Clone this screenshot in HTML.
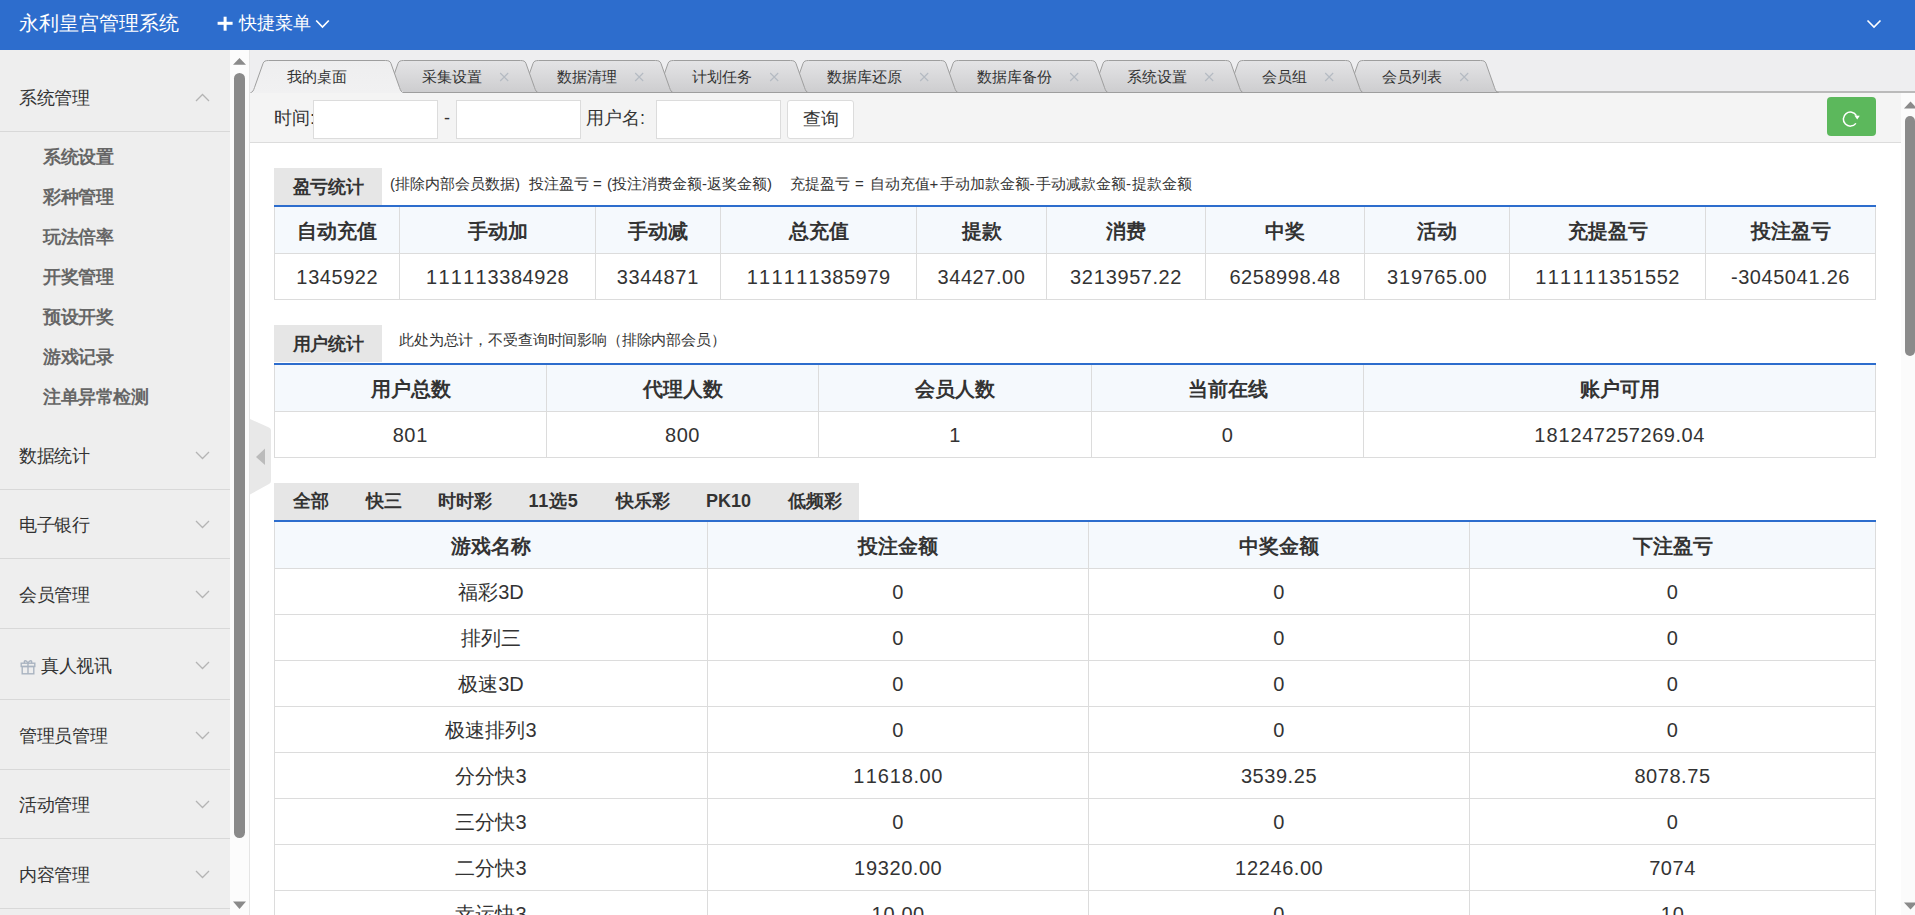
<!DOCTYPE html>
<html><head><meta charset="utf-8"><style>
*{box-sizing:border-box}
html,body{margin:0;padding:0}
body{width:1915px;height:915px;overflow:hidden;position:relative;background:#fff;font-family:"Liberation Sans",sans-serif;color:#333}
.abs{position:absolute;white-space:nowrap}
#hdr{position:absolute;left:0;top:0;width:1915px;height:50px;background:#2d6dcd;color:#fff}
#title{position:absolute;left:19px;top:0;line-height:46px;font-size:20px}
#quick{position:absolute;left:217px;top:0;line-height:46px;font-size:18px}
#side{position:absolute;left:0;top:50px;width:230px;height:865px;background:#eeeeee;overflow:hidden}
.grp{position:absolute;left:0;width:230px}
.gt{position:absolute;left:19px;top:1px;height:100%;display:flex;align-items:center;font-size:18px;letter-spacing:-0.3px;color:#333}
.chev{position:absolute;left:195px;top:31px}
.sub{position:absolute;left:43px;height:40px;line-height:40px;font-size:18px;letter-spacing:-0.4px;font-weight:bold;color:#666}
#sscroll{position:absolute;left:230px;top:50px;width:19px;height:865px;background:#fcfcfc}
#tabbar{position:absolute;left:249px;top:50px;width:1666px;height:43px;background:#eeeef0}
.tl{position:absolute;top:61px;line-height:32px;font-size:15px;color:#333}
.tx{position:absolute;top:60px;line-height:32px;font-size:17px;color:#a9b1bb;width:10px;text-align:center}
#toolbar{position:absolute;left:249px;top:93px;width:1652px;height:50px;background:#f4f4f4;border-bottom:1px solid #dcdcdc}
.lbl{position:absolute;top:0;line-height:50px;font-size:18px;color:#333}
.inp{position:absolute;top:7px;height:39px;background:#fff;border:1px solid #dcdcdc}
.btn{position:absolute;top:7px;height:39px;background:#fff;border:1px solid #dcdcdc;border-radius:3px;font-size:18px;line-height:37px;text-align:center;color:#333}
.sect{position:absolute;left:274px;height:37px;padding-top:1px;background:#e6e6e6;font-size:18px;letter-spacing:-0.4px;font-weight:bold;color:#333;line-height:37px;text-align:center}
.note{position:absolute;font-size:15px;color:#333;white-space:pre}
.bl{position:absolute;left:274px;width:1602px;height:2px;background:#2d6dcd}
.tb{position:absolute;left:274px;border-collapse:collapse;table-layout:fixed;width:1602px}
.tb th,.tb td{border:1px solid #dcdcdc;text-align:center;padding:2px 0 0 0;font-size:20px;color:#333}
.tb tr:first-child th{border-top:none}
.tb td.n{letter-spacing:0.55px}
.o{font-style:normal;padding:0 0.35px}
.th th{background:#f5f9fd;font-weight:bold;padding-top:4px}
#mscroll{position:absolute;left:1901px;top:93px;width:14px;height:822px;background:#fbfbfb}
</style></head><body>
<div id="hdr">
  <div id="title">永利皇宫管理系统</div>
  <div id="quick" style="left:239px;top:0px">快捷菜单</div><svg class="abs" style="left:217px;top:16px" width="16" height="15" viewBox="0 0 16 15"><rect x="0.6" y="5.8" width="15" height="3" fill="#fff"/><rect x="6.6" y="0.7" width="3" height="14" fill="#fff"/></svg><svg class="abs" style="left:315px;top:19px" width="15" height="10" viewBox="0 0 15 10"><path d="M1.2 1.5 L7.5 8 L13.8 1.5" fill="none" stroke="#fff" stroke-width="1.7"/></svg>
  <svg class="abs" style="left:1866px;top:19px" width="16" height="10" viewBox="0 0 16 10"><path d="M1.5 1.5 L8 8 L14.5 1.5" fill="none" stroke="#fff" stroke-width="1.6"/></svg>
</div>
<div id="side">
<div class="grp" style="top:12px;height:70px;border-bottom:1px solid #d8d8d8"><span class="gt">系统管理</span><svg class="chev" width="15" height="9" viewBox="0 0 15 9"><path d="M1 8 L7.5 1.5 L14 8" fill="none" stroke="#b4b4b4" stroke-width="1.3"/></svg></div><div class="sub" style="top:87px">系统设置</div><div class="sub" style="top:127px">彩种管理</div><div class="sub" style="top:167px">玩法倍率</div><div class="sub" style="top:207px">开奖管理</div><div class="sub" style="top:247px">预设开奖</div><div class="sub" style="top:287px">游戏记录</div><div class="sub" style="top:327px">注单异常检测</div><div class="grp" style="top:370px;height:70px;border-bottom:1px solid #d8d8d8"><span class="gt">数据统计</span><svg class="chev" width="15" height="9" viewBox="0 0 15 9"><path d="M1 1 L7.5 7.5 L14 1" fill="none" stroke="#b4b4b4" stroke-width="1.3"/></svg></div><div class="grp" style="top:439px;height:70px;border-bottom:1px solid #d8d8d8"><span class="gt">电子银行</span><svg class="chev" width="15" height="9" viewBox="0 0 15 9"><path d="M1 1 L7.5 7.5 L14 1" fill="none" stroke="#b4b4b4" stroke-width="1.3"/></svg></div><div class="grp" style="top:509px;height:70px;border-bottom:1px solid #d8d8d8"><span class="gt">会员管理</span><svg class="chev" width="15" height="9" viewBox="0 0 15 9"><path d="M1 1 L7.5 7.5 L14 1" fill="none" stroke="#b4b4b4" stroke-width="1.3"/></svg></div><div class="grp" style="top:580px;height:70px;border-bottom:1px solid #d8d8d8"><svg style="position:absolute;left:19.5px;top:28.5px" width="16" height="16" viewBox="0 0 16 16"><g fill="none" stroke="#a9b3c0" stroke-width="1.4"><rect x="1.2" y="4.2" width="13.6" height="3.3"/><rect x="2.2" y="7.5" width="11.6" height="7.3"/><path d="M8 4.2 V14.8"/><path d="M8 4.2 C6.5 0.8 3.5 1 4.5 4.2 M8 4.2 C9.5 0.8 12.5 1 11.5 4.2"/></g></svg><span class="gt" style="left:41px">真人视讯</span><svg class="chev" width="15" height="9" viewBox="0 0 15 9"><path d="M1 1 L7.5 7.5 L14 1" fill="none" stroke="#b4b4b4" stroke-width="1.3"/></svg></div><div class="grp" style="top:650px;height:70px;border-bottom:1px solid #d8d8d8"><span class="gt">管理员管理</span><svg class="chev" width="15" height="9" viewBox="0 0 15 9"><path d="M1 1 L7.5 7.5 L14 1" fill="none" stroke="#b4b4b4" stroke-width="1.3"/></svg></div><div class="grp" style="top:719px;height:70px;border-bottom:1px solid #d8d8d8"><span class="gt">活动管理</span><svg class="chev" width="15" height="9" viewBox="0 0 15 9"><path d="M1 1 L7.5 7.5 L14 1" fill="none" stroke="#b4b4b4" stroke-width="1.3"/></svg></div><div class="grp" style="top:789px;height:70px;border-bottom:1px solid #d8d8d8"><span class="gt">内容管理</span><svg class="chev" width="15" height="9" viewBox="0 0 15 9"><path d="M1 1 L7.5 7.5 L14 1" fill="none" stroke="#b4b4b4" stroke-width="1.3"/></svg></div>
</div>
<div id="sscroll">
  <svg class="abs" style="left:0;top:0" width="19" height="20" viewBox="0 0 19 20"><path d="M3 14.8 L9.5 7.9 L16 14.8 Z" fill="#8a8a8a"/></svg>
  <div class="abs" style="left:4px;top:23px;width:11px;height:765px;background:#8a8a8a;border-radius:6px"></div>
  <svg class="abs" style="left:0;top:845px" width="19" height="20" viewBox="0 0 19 20"><path d="M3 6.5 L9.5 14 L16 6.5 Z" fill="#8a8a8a"/></svg>
</div>
<div id="tabbar"></div>

<svg class="abs" style="left:0;top:0" width="1915" height="95" viewBox="0 0 1915 95">
<defs>
<linearGradient id="gi" x1="0" y1="0" x2="0" y2="1"><stop offset="0" stop-color="#e4e4e6"/><stop offset="1" stop-color="#cdcdcf"/></linearGradient>
<linearGradient id="ga" x1="0" y1="0" x2="0" y2="1"><stop offset="0" stop-color="#eeeeef"/><stop offset="1" stop-color="#f1f1f2"/></linearGradient>
</defs>
<rect x="249" y="91" width="1666" height="2" fill="#bababa"/><path d="M1345.5,92.5 C1347.5,92.5 1348.5,90.5 1349.5,87.5 L1358.0,63.5 C1358.8,61.2 1360.5,60.5 1363.5,60.5 L1480.5,60.5 C1483.5,60.5 1485.2,61.2 1486.0,63.5 L1494.5,87.5 C1495.5,90.5 1496.5,92.5 1498.5,92.5 Z" fill="url(#gi)" stroke="#9e9e9e" stroke-width="1"/><path d="M1225.5,92.5 C1227.5,92.5 1228.5,90.5 1229.5,87.5 L1238.0,63.5 C1238.8,61.2 1240.5,60.5 1243.5,60.5 L1345.5,60.5 C1348.5,60.5 1350.2,61.2 1351.0,63.5 L1359.5,87.5 C1360.5,90.5 1361.5,92.5 1363.5,92.5 Z" fill="url(#gi)" stroke="#9e9e9e" stroke-width="1"/><path d="M1090.5,92.5 C1092.5,92.5 1093.5,90.5 1094.5,87.5 L1103.0,63.5 C1103.8,61.2 1105.5,60.5 1108.5,60.5 L1225.5,60.5 C1228.5,60.5 1230.2,61.2 1231.0,63.5 L1239.5,87.5 C1240.5,90.5 1241.5,92.5 1243.5,92.5 Z" fill="url(#gi)" stroke="#9e9e9e" stroke-width="1"/><path d="M940.5,92.5 C942.5,92.5 943.5,90.5 944.5,87.5 L953.0,63.5 C953.8,61.2 955.5,60.5 958.5,60.5 L1090.5,60.5 C1093.5,60.5 1095.2,61.2 1096.0,63.5 L1104.5,87.5 C1105.5,90.5 1106.5,92.5 1108.5,92.5 Z" fill="url(#gi)" stroke="#9e9e9e" stroke-width="1"/><path d="M790.5,92.5 C792.5,92.5 793.5,90.5 794.5,87.5 L803.0,63.5 C803.8,61.2 805.5,60.5 808.5,60.5 L940.5,60.5 C943.5,60.5 945.2,61.2 946.0,63.5 L954.5,87.5 C955.5,90.5 956.5,92.5 958.5,92.5 Z" fill="url(#gi)" stroke="#9e9e9e" stroke-width="1"/><path d="M655.5,92.5 C657.5,92.5 658.5,90.5 659.5,87.5 L668.0,63.5 C668.8,61.2 670.5,60.5 673.5,60.5 L790.5,60.5 C793.5,60.5 795.2,61.2 796.0,63.5 L804.5,87.5 C805.5,90.5 806.5,92.5 808.5,92.5 Z" fill="url(#gi)" stroke="#9e9e9e" stroke-width="1"/><path d="M520.5,92.5 C522.5,92.5 523.5,90.5 524.5,87.5 L533.0,63.5 C533.8,61.2 535.5,60.5 538.5,60.5 L655.5,60.5 C658.5,60.5 660.2,61.2 661.0,63.5 L669.5,87.5 C670.5,90.5 671.5,92.5 673.5,92.5 Z" fill="url(#gi)" stroke="#9e9e9e" stroke-width="1"/><path d="M385.5,92.5 C387.5,92.5 388.5,90.5 389.5,87.5 L398.0,63.5 C398.8,61.2 400.5,60.5 403.5,60.5 L520.5,60.5 C523.5,60.5 525.2,61.2 526.0,63.5 L534.5,87.5 C535.5,90.5 536.5,92.5 538.5,92.5 Z" fill="url(#gi)" stroke="#9e9e9e" stroke-width="1"/><rect x="249" y="91" width="154.0" height="2" fill="#f1f1f2"/><path d="M250.5,92.5 C252.5,92.5 253.5,90.5 254.5,87.5 L263.0,63.5 C263.8,61.2 265.5,60.5 268.5,60.5 L385.5,60.5 C388.5,60.5 390.2,61.2 391.0,63.5 L399.5,87.5 C400.5,90.5 401.5,92.5 403.5,92.5" fill="url(#ga)" stroke="#9e9e9e" stroke-width="1"/><path d="M500.2,73 L508.2,81 M508.2,73 L500.2,81" stroke="#b4bac2" stroke-width="1.1" fill="none"/><path d="M635.2,73 L643.2,81 M643.2,73 L635.2,81" stroke="#b4bac2" stroke-width="1.1" fill="none"/><path d="M770.2,73 L778.2,81 M778.2,73 L770.2,81" stroke="#b4bac2" stroke-width="1.1" fill="none"/><path d="M920.2,73 L928.2,81 M928.2,73 L920.2,81" stroke="#b4bac2" stroke-width="1.1" fill="none"/><path d="M1070.2,73 L1078.2,81 M1078.2,73 L1070.2,81" stroke="#b4bac2" stroke-width="1.1" fill="none"/><path d="M1205.2,73 L1213.2,81 M1213.2,73 L1205.2,81" stroke="#b4bac2" stroke-width="1.1" fill="none"/><path d="M1325.2,73 L1333.2,81 M1333.2,73 L1325.2,81" stroke="#b4bac2" stroke-width="1.1" fill="none"/><path d="M1460.2,73 L1468.2,81 M1468.2,73 L1460.2,81" stroke="#b4bac2" stroke-width="1.1" fill="none"/>
</svg>
<div class="tl" style="left:287.0px">我的桌面</div><div class="tl" style="left:422.0px">采集设置</div><div class="tl" style="left:557.0px">数据清理</div><div class="tl" style="left:692.0px">计划任务</div><div class="tl" style="left:827.0px">数据库还原</div><div class="tl" style="left:977.0px">数据库备份</div><div class="tl" style="left:1127.0px">系统设置</div><div class="tl" style="left:1262.0px">会员组</div><div class="tl" style="left:1382.0px">会员列表</div>
<div id="toolbar">
  <div class="lbl" style="left:25px">时间:</div>
  <div class="inp" style="left:64px;width:125px"></div>
  <div class="lbl" style="left:195px">-</div>
  <div class="inp" style="left:207px;width:125px"></div>
  <div class="lbl" style="left:337px">用户名:</div>
  <div class="inp" style="left:407px;width:125px"></div>
  <div class="btn" style="left:538px;width:67px">查询</div>
  <div class="abs" style="left:1578px;top:4px;width:49px;height:39px;background:#5cb85c;border-radius:4px"><svg class="abs" style="left:0;top:0" width="49" height="39" viewBox="0 0 49 39"><path d="M28.9 26.4 A7 7 0 1 1 29.4 18.6" fill="none" stroke="#fff" stroke-width="1.5"/><path d="M27.4 18.6 L32.8 18.8 L30.2 22.6 Z" fill="#fff"/></svg></div>
</div>
<div class="sect" style="top:168px;width:108px">盈亏统计</div>
<div class="note" style="left:390px;top:175px">(排除内部会员数据)</div><div class="note" style="left:529px;top:175px">投注盈亏</div><div class="note" style="left:593px;top:175px">=</div><div class="note" style="left:607px;top:175px">(投注消费金额-返奖金额)</div><div class="note" style="left:790px;top:175px">充提盈亏</div><div class="note" style="left:855px;top:175px">=</div><div class="note" style="left:869.5px;top:175px">自动充值+</div><div class="note" style="left:939.5px;top:175px">手动加款金额-</div><div class="note" style="left:1036px;top:175px">手动减款金额-</div><div class="note" style="left:1131.5px;top:175px">提款金额</div>
<div class="bl" style="top:205px"></div>
<table class="tb" style="top:207px"><colgroup><col style="width:125px"><col style="width:196px"><col style="width:125px"><col style="width:196px"><col style="width:130px"><col style="width:159px"><col style="width:159px"><col style="width:145px"><col style="width:196px"><col style="width:170px"></colgroup><tr class="th" style="height:46px"><th>自动充值</th><th>手动加</th><th>手动减</th><th>总充值</th><th>提款</th><th>消费</th><th>中奖</th><th>活动</th><th>充提盈亏</th><th>投注盈亏</th></tr><tr style="height:46px"><td class="n"><i class="o">1</i>345922</td><td class="n"><i class="o">1</i><i class="o">1</i><i class="o">1</i><i class="o">1</i><i class="o">1</i>3384928</td><td class="n">334487<i class="o">1</i></td><td class="n"><i class="o">1</i><i class="o">1</i><i class="o">1</i><i class="o">1</i><i class="o">1</i><i class="o">1</i>385979</td><td class="n">34427.00</td><td class="n">32<i class="o">1</i>3957.22</td><td class="n">6258998.48</td><td class="n">3<i class="o">1</i>9765.00</td><td class="n"><i class="o">1</i><i class="o">1</i><i class="o">1</i><i class="o">1</i><i class="o">1</i><i class="o">1</i>35<i class="o">1</i>552</td><td class="n">-304504<i class="o">1</i>.26</td></tr></table>
<div class="sect" style="top:325px;width:108px">用户统计</div>
<div class="note" style="left:399px;top:331px;letter-spacing:-0.15px">此处为总计，不受查询时间影响（排除内部会员）</div>
<div class="bl" style="top:363px"></div>
<table class="tb" style="top:365px"><colgroup><col style="width:272px"><col style="width:272px"><col style="width:273px"><col style="width:272px"><col style="width:512px"></colgroup><tr class="th" style="height:46px"><th>用户总数</th><th>代理人数</th><th>会员人数</th><th>当前在线</th><th>账户可用</th></tr><tr style="height:46px"><td class="n">80<i class="o">1</i></td><td class="n">800</td><td class="n"><i class="o">1</i></td><td class="n">0</td><td class="n"><i class="o">1</i>8<i class="o">1</i>247257269.04</td></tr></table>
<div class="abs" style="left:274px;top:483px;width:585px;height:37px;background:#e6e6e6"></div>
<div class="abs" style="left:274px;top:483px;height:37px;line-height:37px;font-size:18px;font-weight:bold;color:#333">
<span class="abs" style="left:19px">全部</span><span class="abs" style="left:92px">快三</span><span class="abs" style="left:164px">时时彩</span><span class="abs" style="left:254.5px;letter-spacing:0.7px">11选5</span><span class="abs" style="left:342px">快乐彩</span><span class="abs" style="left:432px">PK10</span><span class="abs" style="left:514px">低频彩</span>
</div>
<div class="bl" style="top:520px"></div>
<table class="tb" style="top:522px"><colgroup><col style="width:433px"><col style="width:381px"><col style="width:381px"><col style="width:406px"></colgroup><tr class="th" style="height:46px"><th>游戏名称</th><th>投注金额</th><th>中奖金额</th><th>下注盈亏</th></tr><tr style="height:46px"><td>福彩3D</td><td class="n">0</td><td class="n">0</td><td class="n">0</td></tr><tr style="height:46px"><td>排列三</td><td class="n">0</td><td class="n">0</td><td class="n">0</td></tr><tr style="height:46px"><td>极速3D</td><td class="n">0</td><td class="n">0</td><td class="n">0</td></tr><tr style="height:46px"><td>极速排列3</td><td class="n">0</td><td class="n">0</td><td class="n">0</td></tr><tr style="height:46px"><td>分分快3</td><td class="n"><i class="o">1</i><i class="o">1</i>6<i class="o">1</i>8.00</td><td class="n">3539.25</td><td class="n">8078.75</td></tr><tr style="height:46px"><td>三分快3</td><td class="n">0</td><td class="n">0</td><td class="n">0</td></tr><tr style="height:46px"><td>二分快3</td><td class="n"><i class="o">1</i>9320.00</td><td class="n"><i class="o">1</i>2246.00</td><td class="n">7074</td></tr><tr style="height:46px"><td>幸运快3</td><td class="n"><i class="o">1</i>0.00</td><td class="n">0</td><td class="n"><i class="o">1</i>0</td></tr></table>
<div class="abs" style="left:250px;top:419px;width:21px;height:76px">
<svg width="21" height="76" viewBox="0 0 21 76"><path d="M0 0 L19 8.5 Q21 9.5 21 11.5 L21 62 Q21 64 19 65 L0 75.5 Z" fill="#e8e8e8"/><path d="M15 29.5 L6 38 L15 46 Z" fill="#bbb"/></svg>
</div>
<div id="mscroll">
  <svg class="abs" style="left:2px;top:8px" width="14" height="8" viewBox="0 0 14 8"><path d="M1 7.5 L7.5 0.5 L14 7.5 Z" fill="#8a8a8a"/></svg>
  <div class="abs" style="left:4px;top:23px;width:10px;height:240px;background:#8a8a8a;border-radius:5px"></div>
  <svg class="abs" style="left:2px;top:809px" width="14" height="8" viewBox="0 0 14 8"><path d="M1 0.5 L7.5 7.5 L14 0.5 Z" fill="#8a8a8a"/></svg>
</div>
<div class="abs" style="left:249px;top:50px;width:1px;height:865px;background:#e5e5e5"></div>
</body></html>
